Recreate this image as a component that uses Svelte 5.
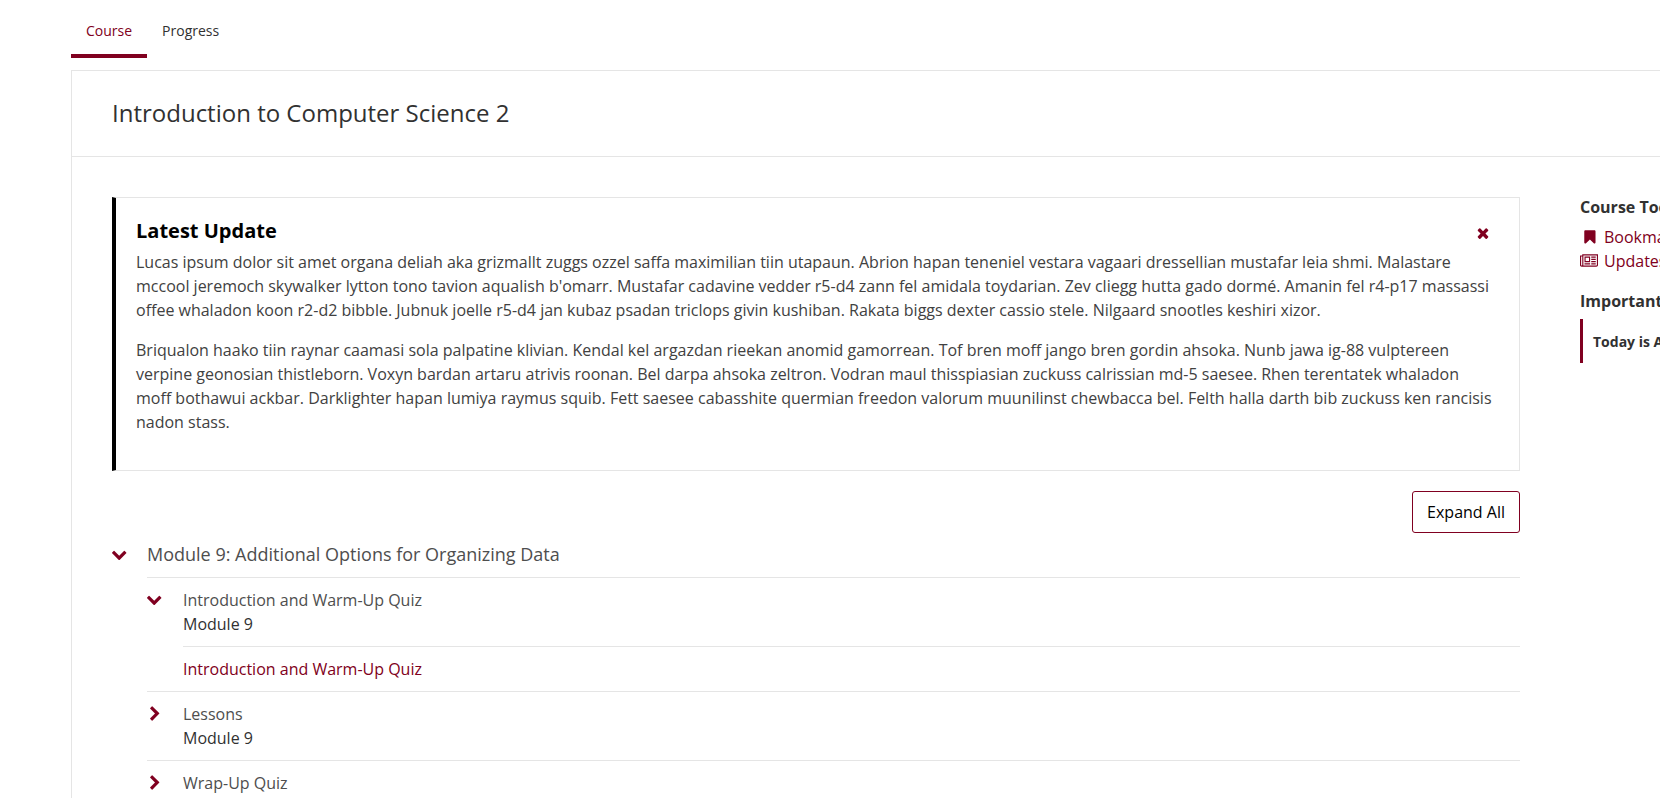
<script>
  const chevronDown =
    'M1683 808l-742 741q-19 19-45 19t-45-19l-742-741q-19-19-19-45.5t19-45.5l166-165q19-19 45-19t45 19l531 531 531-531q19-19 45-19t45 19l166 165q19 19 19 45.5t-19 45.5z';
  const chevronRight =
    'M1363 877l-742 742q-19 19-45 19t-45-19l-166-166q-19-19-19-45t19-45l531-531-531-531q-19-19-19-45t19-45l166-166q19-19 45-19t45 19l742 742q19 19 19 45t-19 45z';

  let showUpdate = $state(true);
  let moduleOpen = $state(true);
  let sections = $state([
    {
      title: 'Introduction and Warm-Up Quiz',
      subtitle: 'Module 9',
      open: true,
      units: ['Introduction and Warm-Up Quiz']
    },
    { title: 'Lessons', subtitle: 'Module 9', open: false, units: [] },
    { title: 'Wrap-Up Quiz', subtitle: 'Module 9', open: false, units: [] }
  ]);

  function expandAll() {
    moduleOpen = true;
    for (const section of sections) section.open = true;
  }
</script>

{#snippet chevron(open)}
  <svg class="icon" viewBox={open ? '90 100 1792 1792' : '0 0 1792 1792'} aria-hidden="true">
    <path d={open ? chevronDown : chevronRight} />
  </svg>
{/snippet}

<div class="page">
  <nav class="tabs">
    <a class="tab active" href="#course">Course</a>
    <a class="tab" href="#progress">Progress</a>
  </nav>

  <div class="panel">
    <header class="course-header">
      <h1>Introduction to Computer Science 2</h1>
    </header>

    <div class="body">
      <main>
        {#if showUpdate}
          <section class="update">
            <div class="update-head">
              <h2>Latest Update</h2>
              <button class="close" aria-label="Dismiss" onclick={() => (showUpdate = false)}>
                <svg class="icon" viewBox="0 0 1792 1792" aria-hidden="true">
                  <path d="M1490 1322q0 40-28 68l-136 136q-28 28-68 28t-68-28l-294-294-294 294q-28 28-68 28t-68-28l-136-136q-28-28-28-68t28-68l294-294-294-294q-28-28-28-68t28-68l136-136q28-28 68-28t68 28l294 294 294-294q28-28 68-28t68 28l136 136q28 28 28 68t-28 68l-294 294 294 294q28 28 28 68z" />
                </svg>
              </button>
            </div>
            <p>Lucas ipsum dolor sit amet organa deliah aka grizmallt zuggs ozzel saffa maximilian tiin utapaun. Abrion hapan teneniel vestara vagaari dressellian mustafar leia shmi. Malastare mccool jeremoch skywalker lytton tono tavion aqualish b'omarr. Mustafar cadavine vedder r5-d4 zann fel amidala toydarian. Zev cliegg hutta gado dormé. Amanin fel r4-p17 massassi offee whaladon koon r2-d2 bibble. Jubnuk joelle r5-d4 jan kubaz psadan triclops givin kushiban. Rakata biggs dexter cassio stele. Nilgaard snootles keshiri xizor.</p>
            <p>Briqualon haako tiin raynar caamasi sola palpatine klivian. Kendal kel argazdan rieekan anomid gamorrean. Tof bren moff jango bren gordin ahsoka. Nunb jawa ig-88 vulptereen verpine geonosian thistleborn. Voxyn bardan artaru atrivis roonan. Bel darpa ahsoka zeltron. Vodran maul thisspiasian zuckuss calrissian md-5 saesee. Rhen terentatek whaladon moff bothawui ackbar. Darklighter hapan lumiya raymus squib. Fett saesee cabasshite quermian freedon valorum muunilinst chewbacca bel. Felth halla darth bib zuckuss ken rancisis nadon stass.</p>
          </section>
        {/if}

        <div class="actions">
          <button class="expand" onclick={expandAll}>Expand All</button>
        </div>

        <div class="outline">
          <button class="row module" aria-expanded={moduleOpen} onclick={() => (moduleOpen = !moduleOpen)}>
            {@render chevron(moduleOpen)}
            <span class="title">Module 9: Additional Options for Organizing Data</span>
          </button>
          {#if moduleOpen}
            <ol class="sections">
              {#each sections as section}
                <li>
                  <button class="row" aria-expanded={section.open} onclick={() => (section.open = !section.open)}>
                    {@render chevron(section.open)}
                    <span class="label">
                      <span class="title">{section.title}</span>
                      <span>{section.subtitle}</span>
                    </span>
                  </button>
                  {#if section.open && section.units.length}
                    <ol class="units">
                      {#each section.units as unit}
                        <li><a href="#unit">{unit}</a></li>
                      {/each}
                    </ol>
                  {/if}
                </li>
              {/each}
            </ol>
          {/if}
        </div>
      </main>

      <aside>
        <h3>Course Tools</h3>
        <ul class="tools">
          <li>
            <a href="#bookmarks">
              <svg class="tool-icon" viewBox="-230 0 2048 1792" aria-hidden="true">
                <path d="M1420 128q23 0 44 9 33 13 52.5 41t19.5 62v1289q0 34-19.5 62t-52.5 41q-19 8-44 8-48 0-83-32l-441-424-441 424q-36 33-83 33-23 0-44-9-33-13-52.5-41t-19.5-62v-1289q0-34 19.5-62t52.5-41q21-9 44-9h1048z" />
              </svg>
              Bookmarks
            </a>
          </li>
          <li>
            <a href="#updates">
              <svg class="tool-icon" viewBox="0 0 2048 1792" aria-hidden="true">
                <path d="M1024 512h-384v384h384v-384zm128 640v128h-640v-128h640zm0-768v640h-640v-640h640zm640 768v128h-512v-128h512zm0-256v128h-512v-128h512zm0-256v128h-512v-128h512zm0-256v128h-512v-128h512zm-1536 960v-960h-128v960q0 26 19 45t45 19 45-19 19-45zm1664 0v-1088h-1536v1088q0 33-11 64h1483q26 0 45-19t19-45zm128-1216v1216q0 80-56 136t-136 56h-1664q-80 0-136-56t-56-136v-1088h256v-128h1792z" />
              </svg>
              Updates
            </a>
          </li>
        </ul>
        <h3>Important Course Dates</h3>
        <div class="today">Today is Aug</div>
      </aside>
    </div>
  </div>
</div>

<style>
  :global(html) {
    overflow: hidden;
  }

  :global(body) {
    background: #fff;
  }

  .page {
    padding-left: 71px;
    font: 16px/24px 'Open Sans', sans-serif;
    color: #313131;
  }

  h1, h2, h3, p, ol, ul {
    margin: 0;
    padding: 0;
  }

  ol, ul {
    list-style: none;
  }

  a {
    color: #800020;
    text-decoration: none;
  }

  button {
    font: inherit;
    color: inherit;
    background: none;
    border: 0;
    padding: 0;
    cursor: pointer;
  }

  svg {
    display: block;
    flex: none;
    fill: #800020;
  }

  .icon {
    width: 16px;
    height: 16px;
  }

  .tabs {
    display: flex;
    margin-bottom: 12px;
  }

  .tab {
    padding: 21px 15px 13px;
    border-bottom: 4px solid transparent;
    font-size: 14px;
    line-height: 20px;
    color: #313131;
  }

  .tab.active {
    color: #800020;
    border-bottom-color: #800020;
  }

  .panel {
    border: 1px solid #e5e5e5;
    border-width: 1px 0 0 1px;
  }

  .course-header {
    padding: 24px 40px 25px;
    border-bottom: 1px solid #e5e5e5;
  }

  h1 {
    font-size: 24px;
    line-height: 36px;
    font-weight: 400;
  }

  .body {
    display: flex;
    gap: 60px;
    padding: 40px 0 0 40px;
  }

  main {
    flex: 1;
    min-width: 0;
  }

  .update {
    padding: 20px 24px 20px 20px;
    border: 1px solid #e5e5e5;
    border-left: 4px solid #000;
    color: #414141;
  }

  .update-head {
    display: flex;
    justify-content: space-between;
    align-items: center;
    margin-bottom: 6px;
    padding-right: 4px;
  }

  h2 {
    font-size: 20px;
    line-height: 26px;
    font-weight: 700;
    color: #000;
  }

  .close {
    padding-top: 3px;
  }

  .update p {
    margin-bottom: 16px;
  }

  .actions {
    display: flex;
    justify-content: flex-end;
    margin: 20px 0 8px;
  }

  .expand {
    padding: 8px 14px;
    border: 1px solid #800020;
    border-radius: 3px;
    color: #000;
  }

  .row {
    display: flex;
    align-items: flex-start;
    gap: 20px;
    width: 100%;
    padding: 10px 0;
    text-align: left;
  }

  .row .icon {
    margin-top: 4px;
  }

  .module {
    gap: 19px;
    padding-top: 0;
    font-size: 18px;
    line-height: 26px;
  }

  .module .icon {
    margin-top: 6px;
  }

  .title {
    color: #4e4e4e;
  }

  .label {
    display: flex;
    flex-direction: column;
  }

  .sections {
    padding-left: 35px;
  }

  .sections > li {
    border-top: 1px solid #e5e5e5;
  }

  .units {
    padding-left: 36px;
  }

  .units li {
    padding: 10px 0;
    border-top: 1px solid #e5e5e5;
  }

  aside {
    flex: 0 0 80px;
    min-width: 0;
    overflow: hidden;
    white-space: nowrap;
  }

  h3 {
    margin-bottom: 8px;
    font-size: 16px;
    line-height: 20px;
    font-weight: 700;
  }

  .tools {
    margin-bottom: 18px;
  }

  .tools a {
    display: flex;
    align-items: center;
    gap: 6px;
  }

  .tool-icon {
    width: 18px;
    height: 16px;
  }

  .today {
    padding: 13px 10px 11px;
    border-left: 3px solid #800020;
    font-size: 14px;
    line-height: 20px;
    font-weight: 700;
  }
</style>
